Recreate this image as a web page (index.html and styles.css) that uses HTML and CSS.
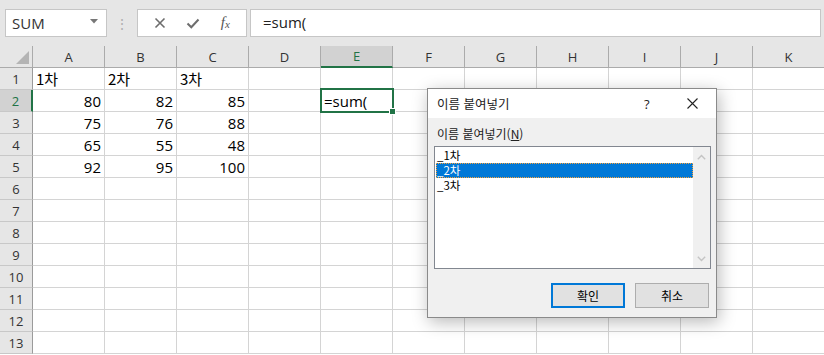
FILE: index.html
```html
<!DOCTYPE html>
<html lang="ko">
<head>
    <meta charset="UTF-8">
    <title>이름 붙여넣기</title>
    <link rel="stylesheet" href="styles.css">
</head>
<body>
    <div class="topbar">
        <div class="namebox">
            <span>SUM</span>
            <svg class="caret" width="8" height="5" viewBox="0 0 8 5"><path d="M0 0h8L4 4.5z" fill="#777"/></svg>
        </div>
        <div class="grip">⋮</div>
        <div class="fx-buttons">
            <svg width="12" height="12" viewBox="0 0 12 12"><path d="M1.5 1.5l9 9M10.5 1.5l-9 9" stroke="#6d6d6d" stroke-width="1.6" fill="none"/></svg>
            <svg width="14" height="12" viewBox="0 0 14 12"><path d="M1.5 6.5l3.8 3.8L12.5 2.5" stroke="#6d6d6d" stroke-width="2" fill="none"/></svg>
            <span class="fx">f<span class="fx-x">x</span></span>
        </div>
        <div class="formula">=sum(</div>
    </div>

    <div class="sheet">
        <div class="corner"></div>
        <div class="col-head">A</div>
        <div class="col-head">B</div>
        <div class="col-head">C</div>
        <div class="col-head">D</div>
        <div class="col-head active">E</div>
        <div class="col-head">F</div>
        <div class="col-head">G</div>
        <div class="col-head">H</div>
        <div class="col-head">I</div>
        <div class="col-head">J</div>
        <div class="col-head">K</div>
    </div>

    <div class="dialog">
        <div class="dialog-title">
            <span>이름 붙여넣기</span>
            <span class="help">?</span>
            <svg class="close" width="11" height="11" viewBox="0 0 11 11"><path d="M0.5 0.5l10 10M10.5 0.5l-10 10" stroke="#222" stroke-width="1.1" fill="none"/></svg>
        </div>
        <div class="dialog-body">
            <div class="label">이름 붙여넣기(<u>N</u>)</div>
            <div class="listbox">
                <ul class="items">
                    <li>_1차</li>
                    <li class="selected">_2차</li>
                    <li>_3차</li>
                </ul>
                <div class="scrollbar">
                    <svg width="9" height="6" viewBox="0 0 9 6"><path d="M0.8 5.2L4.5 1.5l3.7 3.7" stroke="#c4c4c4" stroke-width="1.4" fill="none"/></svg>
                    <svg width="9" height="6" viewBox="0 0 9 6"><path d="M0.8 0.8L4.5 4.5l3.7-3.7" stroke="#c4c4c4" stroke-width="1.4" fill="none"/></svg>
                </div>
            </div>
            <div class="actions">
                <button class="btn default">확인</button>
                <button class="btn">취소</button>
            </div>
        </div>
    </div>

    <script>
        // fill the rows of the sheet
        var data = [
            ['1차', '2차', '3차'],
            [80, 82, 85],
            [75, 76, 88],
            [65, 55, 48],
            [92, 95, 100]
        ];
        var sheet = document.querySelector('.sheet');
        for (var r = 1; r <= 13; r++) {
            var head = document.createElement('div');
            head.className = 'row-head' + (r === 2 ? ' active' : '');
            head.textContent = r;
            sheet.appendChild(head);
            for (var c = 0; c < 11; c++) {
                var cell = document.createElement('div');
                cell.className = 'cell';
                var row = data[r - 1];
                if (row && c < 3) {
                    cell.textContent = row[c];
                    if (typeof row[c] === 'number') cell.classList.add('num');
                }
                if (r === 2 && c === 4) {
                    cell.classList.add('current');
                    cell.textContent = '=sum(';
                }
                sheet.appendChild(cell);
            }
        }
    </script>
</body>
</html>
```

FILE: styles.css
```css
* {
    box-sizing: border-box;
}

body {
    margin: 0;
    background-color: #fff;
    font-family: 'Noto Sans CJK KR', 'Open Sans', sans-serif;
    color: #000;
    overflow: hidden;
}

.topbar {
    height: 46px;
    background-color: #e6e6e6;
    display: flex;
    align-items: center;
    padding: 0 0 1px 5px;
}

.namebox {
    width: 102px;
    height: 28px;
    background-color: #fff;
    border: 1px solid #c6c6c6;
    display: flex;
    align-items: center;
    justify-content: space-between;
    padding: 0 8px 0 6px;
    font-family: 'Open Sans', sans-serif;
    font-size: 15px;
    color: #333;
}

.caret {
    margin-bottom: 2px;
}

.grip {
    width: 30px;
    text-align: center;
    color: #b0b0b0;
    font-size: 14px;
}

.fx-buttons {
    width: 110px;
    height: 28px;
    background-color: #fff;
    border: 1px solid #c6c6c6;
    display: flex;
    align-items: center;
    justify-content: space-around;
    padding: 0 6px 0 6px;
}

.fx {
    font-family: 'Liberation Serif', serif;
    font-style: italic;
    font-size: 15px;
    line-height: 15px;
    color: #555;
}

.fx-x {
    font-size: 11px;
    position: relative;
    top: 1px;
}

.formula {
    flex: 1;
    height: 28px;
    margin-left: 3px;
    margin-right: 3px;
    background-color: #fff;
    border: 1px solid #c6c6c6;
    display: flex;
    align-items: center;
    padding: 0 0 2px 12px;
    font-family: 'Open Sans', sans-serif;
    font-size: 15px;
    color: #222;
}

.sheet {
    display: grid;
    grid-template-columns: 33px repeat(11, 72px);
    grid-auto-rows: 22px;
}

.corner {
    background-color: #e6e6e6;
    border-right: 1px solid #ababab;
    border-bottom: 1px solid #ababab;
    position: relative;
}

.corner::after {
    content: '';
    position: absolute;
    right: 3px;
    bottom: 3px;
    border-style: solid;
    border-width: 0 0 13px 13px;
    border-color: transparent transparent #b4b4b4 transparent;
}

.col-head {
    background-color: #e6e6e6;
    border-right: 1px solid #ababab;
    border-bottom: 1px solid #ababab;
    display: flex;
    align-items: center;
    justify-content: center;
    font-family: 'Open Sans', sans-serif;
    font-size: 13px;
    color: #333;
}

.col-head.active {
    background-color: #d2d2d2;
    border-bottom: 2px solid #217346;
    color: #217346;
}

.row-head {
    background-color: #e6e6e6;
    border-right: 1px solid #9b9b9b;
    border-bottom: 1px solid #c8c8c8;
    display: flex;
    align-items: center;
    justify-content: center;
    padding-top: 1px;
    font-family: 'Open Sans', sans-serif;
    font-size: 13px;
    color: #333;
}

.row-head.active {
    background-color: #d2d2d2;
    border-right: 2px solid #217346;
    color: #217346;
}

.cell {
    border-right: 1px solid #d4d4d4;
    border-bottom: 1px solid #d4d4d4;
    display: flex;
    align-items: flex-end;
    padding: 0 3px 0 3px;
    font-size: 15px;
    line-height: 20px;
    white-space: nowrap;
}

.cell.num {
    justify-content: flex-end;
    font-family: 'Open Sans', sans-serif;
}

.cell.current {
    position: relative;
    font-family: 'Open Sans', sans-serif;
}

.cell.current::before {
    content: '';
    position: absolute;
    left: -1px;
    top: -2px;
    right: -2px;
    bottom: -2px;
    border: 2px solid #217346;
}

.cell.current::after {
    content: '';
    position: absolute;
    right: -4px;
    bottom: -4px;
    width: 5px;
    height: 5px;
    background-color: #217346;
    border: 1px solid #fff;
}

.dialog {
    position: absolute;
    left: 427px;
    top: 88px;
    width: 290px;
    height: 230px;
    background-color: #f0f0f0;
    border: 1px solid #8a8a8a;
    box-shadow: 2px 4px 16px rgba(0, 0, 0, 0.28);
    font-family: 'Noto Sans CJK KR', sans-serif;
    font-size: 12px;
    color: #000;
}

.dialog-title {
    height: 29px;
    background-color: #fff;
    display: flex;
    align-items: center;
    padding: 0 0 0 9px;
    font-size: 12.5px;
    color: #222;
}

.dialog-title span:first-child {
    flex: 1;
}

.help {
    width: 20px;
    font-size: 13px;
    font-family: 'Open Sans', sans-serif;
    margin-right: 23px;
}

.close {
    margin-right: 18px;
}

.dialog-body {
    padding: 8px 6px 0 6px;
}

.label {
    height: 20px;
    padding-left: 3px;
    line-height: 16px;
    color: #222;
}

.listbox {
    width: 277px;
    height: 123px;
    background-color: #fff;
    border: 1px solid #828790;
    display: flex;
}

.items {
    list-style: none;
    margin: 0;
    padding: 1px 0 0 1px;
    flex: 1;
}

.items li {
    height: 15px;
    line-height: 15px;
    padding-left: 1px;
    font-size: 11.5px;
    overflow: hidden;
}

.items li.selected {
    background-color: #0078d7;
    color: #fff;
    outline: 1px dotted #f7a23a;
    outline-offset: -1px;
}

.scrollbar {
    width: 17px;
    background-color: #f0f0f0;
    display: flex;
    flex-direction: column;
    justify-content: space-between;
    align-items: center;
    padding: 7px 0 6px 0;
}

.actions {
    display: flex;
    justify-content: flex-end;
    gap: 10px;
    margin-top: 14px;
    padding-right: 1px;
}

.btn {
    width: 74px;
    height: 25px;
    background-color: #e1e1e1;
    border: 1px solid #adadad;
    font-family: 'Noto Sans CJK KR', sans-serif;
    font-size: 12px;
    color: #000;
    padding: 0;
}

.btn.default {
    border: 2px solid #0078d7;
}
```
